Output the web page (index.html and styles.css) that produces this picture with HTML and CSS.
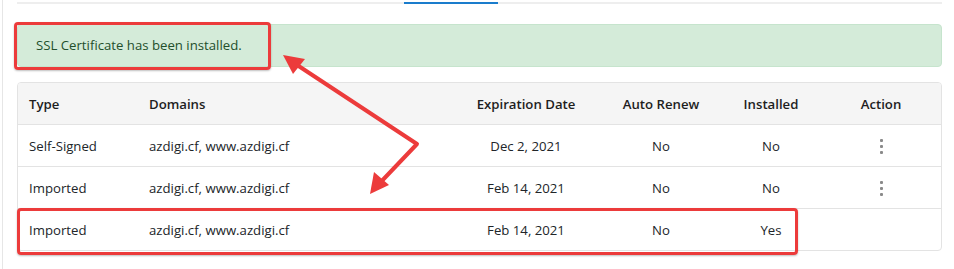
FILE: index.html
```html
<!doctype html>
<html>
<head>
<meta charset="UTF-8">
<title>SSL</title>
<link rel="stylesheet" href="styles.css">
</head>
<body>
<div class="page">
  <div class="tabs"><span class="tab-active"></span></div>

  <div class="alert">SSL Certificate has been installed.</div>

  <div class="card">
    <table class="certs">
      <colgroup>
        <col class="c-type"><col class="c-dom"><col class="c-exp"><col class="c-auto"><col class="c-inst"><col class="c-act">
      </colgroup>
      <tr class="head">
        <th class="left">Type</th>
        <th class="left">Domains</th>
        <th class="exp">Expiration Date</th>
        <th>Auto Renew</th>
        <th>Installed</th>
        <th>Action</th>
      </tr>
      <tr>
        <td class="left">Self-Signed</td>
        <td class="left">azdigi.cf, www.azdigi.cf</td>
        <td class="exp">Dec 2, 2021</td>
        <td>No</td>
        <td>No</td>
        <td><span class="kebab"><i></i><i></i><i></i></span></td>
      </tr>
      <tr>
        <td class="left">Imported</td>
        <td class="left">azdigi.cf, www.azdigi.cf</td>
        <td class="exp">Feb 14, 2021</td>
        <td>No</td>
        <td>No</td>
        <td><span class="kebab"><i></i><i></i><i></i></span></td>
      </tr>
      <tr class="last">
        <td class="left">Imported</td>
        <td class="left">azdigi.cf, www.azdigi.cf</td>
        <td class="exp">Feb 14, 2021</td>
        <td>No</td>
        <td>Yes</td>
        <td></td>
      </tr>
    </table>
  </div>

  <!-- annotations -->
  <div class="mark mark-alert"></div>
  <div class="mark mark-row"></div>
  <svg class="arrows" width="954" height="269" viewBox="0 0 954 269">
    <polyline points="291,61 417,144 377,186" fill="none" stroke="#ec3b3b" stroke-width="4" stroke-linejoin="round"/>
    <polygon points="283,55 305,59 293,74" fill="#ec3b3b"/>
    <polygon points="370,194 374,172 389,185" fill="#ec3b3b"/>
  </svg>
</div>
</body>
</html>
```

FILE: styles.css
```css
body {
	margin: 0;
	background: #fff;
	font-family: "Open Sans", "Noto Sans", sans-serif;
	font-size: 13.2px;
	color: #212529;
}
.page {
	position: relative;
	margin-left: 2px;
	border-left: 1px solid #e6e6e6;
	padding: 2px 12px 0 14px;
	height: 267px;
}
.tabs {
	position: relative;
	height: 2px;
	background: #eeeeee;
}
.tab-active {
	position: absolute;
	left: 387px;
	top: 0;
	width: 94px;
	height: 2px;
	background: #1a7ccc;
}
.alert {
	margin-top: 20px;
	height: 41px;
	line-height: 41px;
	padding: 0 18px;
	background: #d4ebd9;
	border: 1px solid #c6e4cd;
	border-radius: 4px;
	color: #234f2c;
}
.card {
	margin-top: 15px;
	border: 1px solid #e3e3e3;
	border-radius: 4px;
	overflow: hidden;
}
.certs {
	width: 100%;
	table-layout: fixed;
	border-collapse: collapse;
}
.c-type { width: 120px; }
.c-dom { width: 328px; }
.c-exp { width: 135px; }
.c-auto { width: 120px; }
.c-inst { width: 100px; }
.c-act { width: 120px; }
.certs th, .certs td {
	height: 41px;
	padding: 0;
	text-align: center;
	border-top: 1px solid #e3e3e3;
	white-space: nowrap;
}
.certs th {
	font-weight: 600;
	color: #1e1e1e;
	background: #f5f5f5;
	border-top: none;
}
.certs .left {
	text-align: left;
	padding-left: 11px;
}
.certs .exp {
	padding-right: 15px;
}
.kebab {
	display: inline-flex;
	flex-direction: column;
	gap: 3px;
	vertical-align: middle;
}
.kebab i {
	width: 3px;
	height: 3px;
	background: #8a8a8a;
	border-radius: 1px;
}
.mark {
	position: absolute;
	border: 3px solid #ec3b3b;
	border-radius: 4px;
	box-shadow: 0 1px 2px rgba(0, 0, 0, 0.25);
}
.mark-alert {
	left: 11px;
	top: 22px;
	width: 251px;
	height: 42px;
}
.mark-row {
	left: 14px;
	top: 208px;
	width: 775px;
	height: 41px;
}
.arrows {
	position: absolute;
	left: -3px;
	top: 0;
	pointer-events: none;
}
```
